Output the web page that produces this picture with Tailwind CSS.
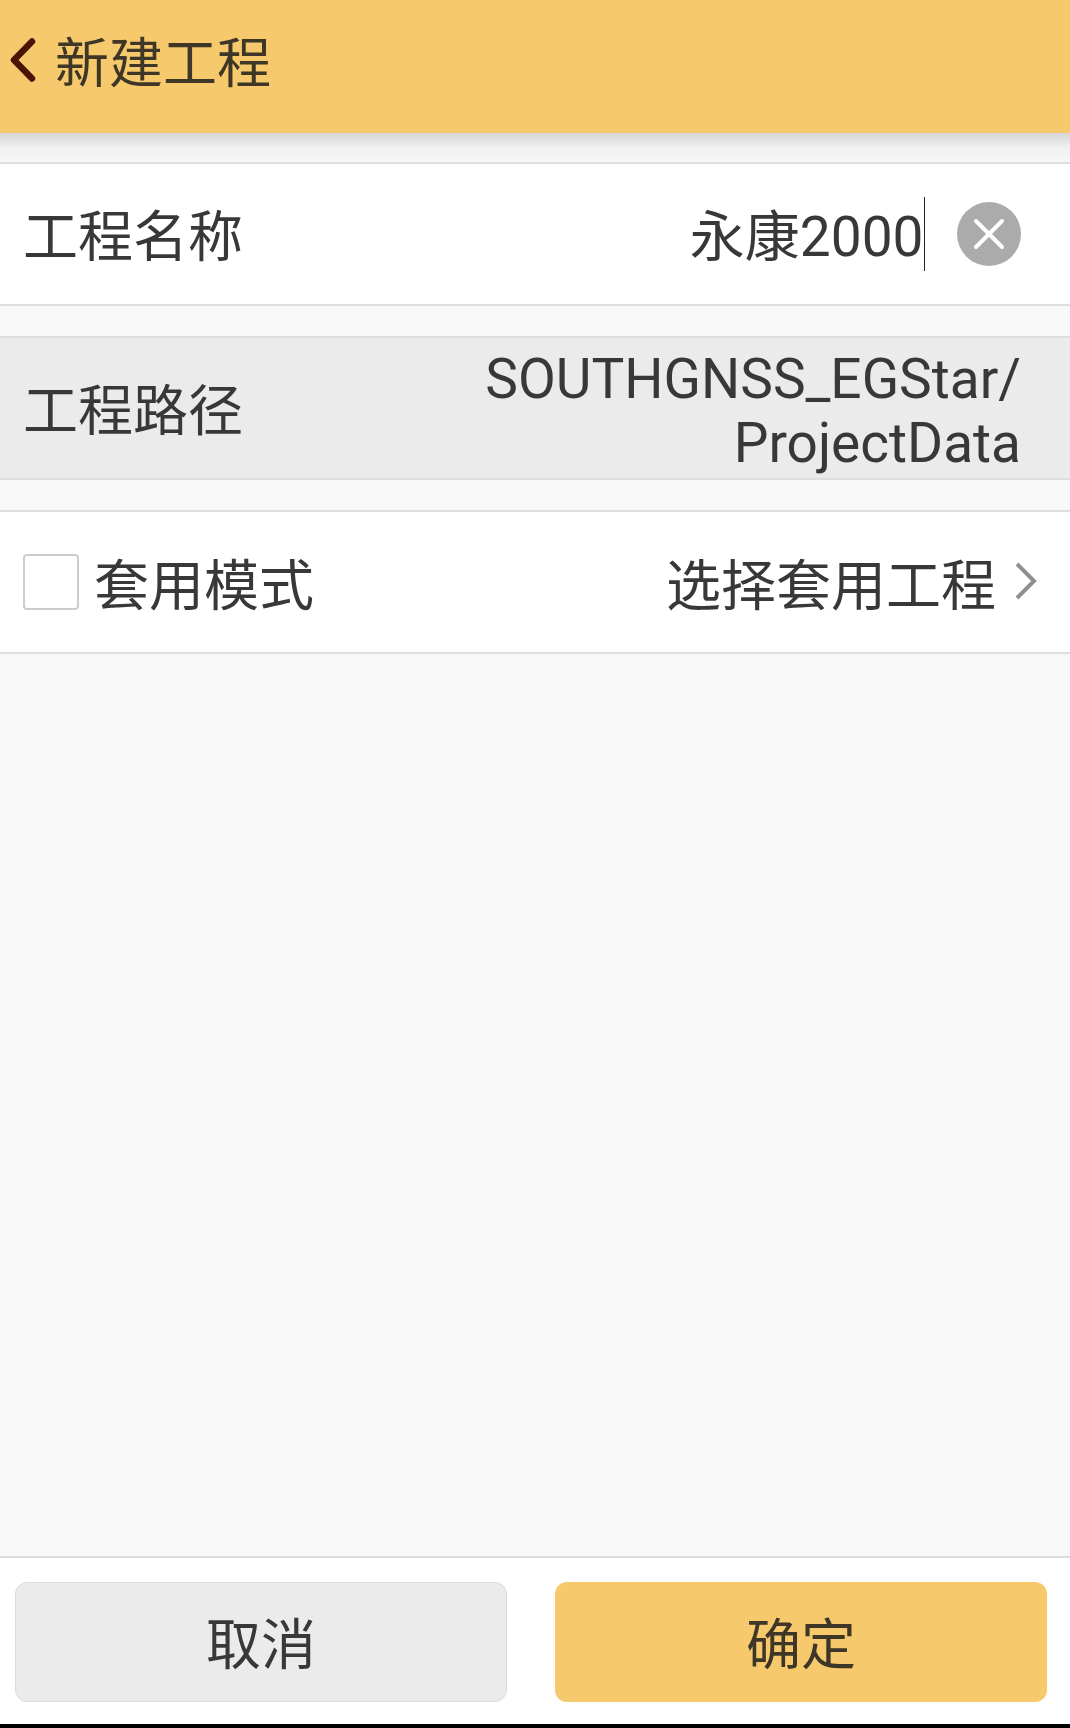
<!DOCTYPE html>
<html lang="zh-CN">
<head>
    <meta charset="UTF-8" />
    <meta name="viewport" content="width=device-width, initial-scale=1.0" />
    <title>新建工程</title>
    <script src="https://cdn.jsdelivr.net/npm/@tailwindcss/browser@4"></script>
</head>
<body class="bg-black font-['Roboto','Noto_Sans_CJK_SC',sans-serif] text-[55px] text-[#383838]">
    <div class="flex flex-col h-[1724px] bg-[#f8f8f8]">
        <!-- Header -->
        <header class="flex items-center h-[133px] shrink-0 pl-[6px] pb-[4px] gap-[17px] bg-[#f5c96c]">
            <svg width="32" height="50" viewBox="0 0 32 50" class="shrink-0 mb-[9px]">
                <path d="M26 6.5 L8 25 L26 43.5" fill="none" stroke="#4a1406" stroke-width="6.5" stroke-linecap="round" stroke-linejoin="round" />
            </svg>
            <span class="text-[54px] text-[#3e3626]">新建工程</span>
        </header>
        <div class="h-[29px] shrink-0 bg-linear-to-b from-[#d6d6d6] via-[#f0f0f0] to-[#f6f6f6]"></div>

        <!-- Name -->
        <section class="flex items-center h-[144px] shrink-0 pl-[23px] pr-[49px] bg-white border-y-2 border-[#dedede]">
            <span class="pt-[7px]">工程名称</span>
            <span class="ml-auto flex items-center">
                <span class="pt-[7px]">永康2000</span>
                <span class="w-[1.5px] h-[74px] bg-[#222222]"></span>
            </span>
            <span class="ml-[32px] flex items-center justify-center w-[64px] h-[64px] rounded-full bg-[#ababab]">
                <svg width="32" height="32" viewBox="0 0 32 32">
                    <path d="M3 3 L29 29 M29 3 L3 29" stroke="#ffffff" stroke-width="4" stroke-linecap="round" />
                </svg>
            </span>
        </section>
        <div class="h-[30px] shrink-0"></div>

        <!-- Path -->
        <section class="flex items-center h-[144px] shrink-0 pl-[23px] pr-[49px] bg-[#ebebeb] border-y-2 border-[#dedede]">
            <span class="pt-[7px]">工程路径</span>
            <span class="ml-auto pt-[6px] text-right leading-[64px]">SOUTHGNSS_EGStar/<br />ProjectData</span>
        </section>
        <div class="h-[30px] shrink-0"></div>

        <!-- Template mode -->
        <section class="flex items-center h-[144px] shrink-0 pl-[23px] pr-[32px] bg-white border-y-2 border-[#dedede]">
            <span class="w-[56px] h-[56px] rounded-[4px] bg-white border-2 border-[#cccccc]"></span>
            <span class="ml-[15px] pt-[9px]">套用模式</span>
            <span class="ml-auto pt-[9px]">选择套用工程</span>
            <svg width="24" height="40" viewBox="0 0 24 40" class="ml-[18px] mb-[2px] shrink-0">
                <path d="M3 3 L20 20 L3 37" fill="none" stroke="#8f8f8f" stroke-width="4" />
            </svg>
        </section>

        <div class="flex-1"></div>

        <!-- Buttons -->
        <footer class="flex gap-[48px] h-[168px] shrink-0 px-[15px] pt-[24px] bg-white border-t-2 border-[#dcdcdc]">
            <button class="flex items-center justify-center w-[492px] h-[120px] pt-[6px] rounded-[12px] bg-[#ebebeb] border border-[#dcdcdc]">取消</button>
            <button class="flex items-center justify-center w-[492px] h-[120px] pt-[6px] rounded-[12px] bg-[#f5c96c] text-[#3e3626]">确定</button>
        </footer>
    </div>
</body>
</html>
